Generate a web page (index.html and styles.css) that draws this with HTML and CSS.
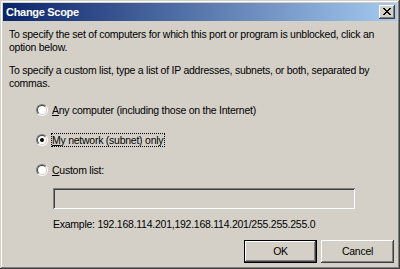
FILE: index.html
```html
<!DOCTYPE html>
<html>
<head>
<meta charset="utf-8">
<link rel="stylesheet" href="styles.css">
</head>
<body>
<div class="window">
  <div class="titlebar">
    <span class="title">Change Scope</span>
    <span class="close">
      <svg width="8" height="7" viewBox="0 0 8 7" shape-rendering="crispEdges">
        <path d="M0 0h2v1h-2z M6 0h2v1h-2z M1 1h2v1h-2z M5 1h2v1h-2z M2 2h4v1h-4z M3 3h2v1h-2z M2 4h4v1h-4z M1 5h2v1h-2z M5 5h2v1h-2z M0 6h2v1h-2z M6 6h2v1h-2z" fill="#000"/>
      </svg>
    </span>
  </div>
  <div class="content">
    <p class="para">To specify the set of computers for which this port or program is unblocked, click an<br>option below.</p>
    <p class="para para2">To specify a custom list, type a list of IP addresses, subnets, or both, separated by<br>commas.</p>
    <div class="options">
      <div class="option"><span class="radio"></span><span class="label"><u>A</u>ny computer (including those on the Internet)</span></div>
      <div class="option"><span class="radio checked"></span><span class="label focused"><u>M</u>y network (subnet) only</span></div>
      <div class="option"><span class="radio"></span><span class="label"><u>C</u>ustom list:</span></div>
    </div>
    <div class="custom">
      <div class="textbox"></div>
      <div class="example">Example: 192.168.114.201,192.168.114.201/255.255.255.0</div>
    </div>
    <div class="buttons">
      <span class="btn default"><span class="btn-inner">OK</span></span>
      <span class="btn"><span class="btn-inner">Cancel</span></span>
    </div>
  </div>
</div>
</body>
</html>
```
FILE: styles.css
```css
html, body {
  margin: 0;
  padding: 0;
  background: #d4d0c8;
}
body {
  font-family: "Liberation Sans", Arial, sans-serif;
  font-size: 10.5px;
  letter-spacing: -0.25px;
  color: #000;
}
.window {
  width: 400px;
  height: 269px;
  box-sizing: border-box;
  padding: 3px;
  background: #d4d0c8;
  box-shadow: inset -1px -1px #404040, inset 1px 1px #d4d0c8, inset -2px -2px #808080, inset 2px 2px #ffffff;
  display: flex;
  flex-direction: column;
}
.titlebar {
  height: 18px;
  background: linear-gradient(to right, #0a246a, #a6caf0);
  display: flex;
  align-items: center;
  justify-content: space-between;
  padding: 0 2px 0 3px;
}
.title {
  color: #fff;
  font-weight: bold;
  font-size: 11px;
  letter-spacing: -0.3px;
  line-height: 13px;
}
.close {
  width: 16px;
  height: 14px;
  box-sizing: border-box;
  background: #d4d0c8;
  box-shadow: inset -1px -1px #404040, inset 1px 1px #ffffff, inset -2px -2px #808080, inset 2px 2px #d4d0c8;
  display: flex;
  align-items: center;
  justify-content: center;
  padding: 0 1px 1px 0;
}
.close svg { display: block; }
.content {
  padding: 7px 3px 0 6px;
  display: flex;
  flex-direction: column;
}
.para {
  margin: 0;
  line-height: 13px;
  white-space: nowrap;
}
.para2 {
  margin-top: 10px;
}
.options {
  margin-top: 13px;
  padding-left: 27px;
  display: flex;
  flex-direction: column;
  gap: 16px;
}
.option {
  display: flex;
  align-items: center;
  height: 14px;
}
.radio {
  position: relative;
  width: 12px;
  height: 12px;
  box-sizing: border-box;
  border-radius: 50%;
  border: 1px solid;
  border-color: #808080 #ffffff #ffffff #808080;
  flex: none;
}
.radio::before {
  content: "";
  position: absolute;
  inset: 0;
  border-radius: 50%;
  border: 1px solid;
  border-color: #404040 #d4d0c8 #d4d0c8 #404040;
  background: #fff;
}
.radio.checked::after {
  content: "";
  position: absolute;
  left: 3px;
  top: 3px;
  width: 4px;
  height: 4px;
  border-radius: 50%;
  background: #000;
}
.label {
  margin-left: 3px;
  border: 1px solid transparent;
  line-height: 12px;
  padding-right: 1px;
}
.label.focused {
  border: 1px dotted #000;
}
.custom {
  margin-top: 11px;
  padding-left: 44px;
}
.textbox {
  width: 302px;
  height: 21px;
  box-sizing: border-box;
  background: #d4d0c8;
  box-shadow: inset 1px 1px #808080, inset -1px -1px #ffffff, inset 2px 2px #404040, inset -2px -2px #d4d0c8;
}
.example {
  margin-top: 9px;
  line-height: 13px;
}
.buttons {
  margin-top: 9px;
  display: flex;
  justify-content: flex-end;
  gap: 4px;
}
.btn {
  width: 73px;
  height: 23px;
  box-sizing: border-box;
  background: #d4d0c8;
  box-shadow: inset -1px -1px #404040, inset 1px 1px #ffffff, inset -2px -2px #808080, inset 2px 2px #d4d0c8;
  display: flex;
}
.btn.default {
  border: 1px solid #000;
  box-shadow: none;
}
.btn-inner {
  flex: 1;
  display: flex;
  align-items: center;
  justify-content: center;
  line-height: 13px;
}
.btn.default .btn-inner {
  box-shadow: inset -1px -1px #404040, inset 1px 1px #ffffff, inset -2px -2px #808080, inset 2px 2px #d4d0c8;
}
```
